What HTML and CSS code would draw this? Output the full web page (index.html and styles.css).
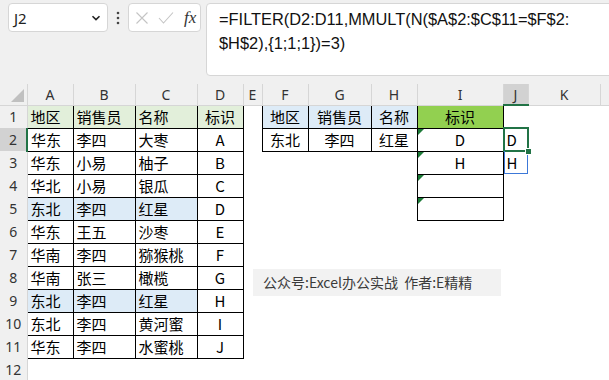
FILE: index.html
```html
<!DOCTYPE html>
<html lang="zh-CN">
<head>
<meta charset="UTF-8">
<title>FILTER MMULT</title>
<link rel="stylesheet" href="styles.css">
</head>
<body>
<div class="toolbar">
  <div class="namebox">
    <span>J2</span>
    <svg width="10" height="6" viewBox="0 0 10 6"><path d="M1.5 1.2 L5 4.6 L8.5 1.2" fill="none" stroke="#222" stroke-width="1.6"/></svg>
  </div>
  <svg class="dots" width="4" height="14" viewBox="0 0 4 14"><circle cx="2" cy="2" r="1.3" fill="#444"/><circle cx="2" cy="7" r="1.3" fill="#444"/><circle cx="2" cy="12" r="1.3" fill="#444"/></svg>
  <div class="fxbox">
    <svg width="14" height="14" viewBox="0 0 14 14"><path d="M1.5 1.5 L12.5 12.5 M12.5 1.5 L1.5 12.5" stroke="#c4c4c4" stroke-width="1.1"/></svg>
    <svg width="16" height="14" viewBox="0 0 16 14"><path d="M1 7 L5.5 12 L15 1.5" fill="none" stroke="#c4c4c4" stroke-width="1.1"/></svg>
    <span class="fx">fx</span>
  </div>
  <div class="formula">=FILTER(D2:D11,MMULT(N($A$2:$C$11=$F$2:<br>$H$2),{1;1;1})=3)</div>
</div>

<div class="sheet">
  <table class="grid">
    <colgroup>
      <col class="w-rh"><col class="w-46"><col class="w-62"><col class="w-62"><col class="w-46">
      <col class="w-19"><col class="w-46"><col class="w-63"><col class="w-46"><col class="w-86">
      <col class="w-25"><col class="w-72"><col class="w-20">
    </colgroup>
    <tr class="colhead">
      <th class="corner"><span class="corner-tri"></span></th>
      <th>A</th><th>B</th><th>C</th><th>D</th><th>E</th><th>F</th><th>G</th><th>H</th><th>I</th><th class="cur">J</th><th>K</th><th></th>
    </tr>
    <tr>
      <td class="rh">1</td>
      <td class="b l green">地区</td><td class="b l green">销售员</td><td class="b l green">名称</td><td class="b c green">标识</td>
      <td></td>
      <td class="b c blue">地区</td><td class="b c blue">销售员</td><td class="b c blue">名称</td><td class="b c lime">标识</td>
      <td></td><td></td><td></td>
    </tr>
    <tr>
      <td class="rh cur">2</td>
      <td class="b l">华东</td><td class="b l">李四</td><td class="b l">大枣</td><td class="b c">A</td>
      <td></td>
      <td class="b c">东北</td><td class="b c">李四</td><td class="b c">红星</td><td class="b c tri">D</td>
      <td class="l sel">D<span class="handle"></span></td><td></td><td></td>
    </tr>
    <tr>
      <td class="rh">3</td>
      <td class="b l">华东</td><td class="b l">小易</td><td class="b l">柚子</td><td class="b c">B</td>
      <td></td><td></td><td></td><td></td><td class="b c tri">H</td>
      <td class="l spill">H</td><td></td><td></td>
    </tr>
    <tr>
      <td class="rh">4</td>
      <td class="b l">华北</td><td class="b l">小易</td><td class="b l">银瓜</td><td class="b c">C</td>
      <td></td><td></td><td></td><td></td><td class="b c tri"></td>
      <td></td><td></td><td></td>
    </tr>
    <tr>
      <td class="rh">5</td>
      <td class="b l blue">东北</td><td class="b l blue">李四</td><td class="b l blue">红星</td><td class="b c">D</td>
      <td></td><td></td><td></td><td></td><td class="b c tri"></td>
      <td></td><td></td><td></td>
    </tr>
    <tr>
      <td class="rh">6</td>
      <td class="b l">华东</td><td class="b l">王五</td><td class="b l">沙枣</td><td class="b c">E</td>
      <td></td><td></td><td></td><td></td><td></td><td></td><td></td><td></td>
    </tr>
    <tr>
      <td class="rh">7</td>
      <td class="b l">华南</td><td class="b l">李四</td><td class="b l">猕猴桃</td><td class="b c">F</td>
      <td></td><td></td><td></td><td></td><td></td><td></td><td></td><td></td>
    </tr>
    <tr>
      <td class="rh">8</td>
      <td class="b l">华南</td><td class="b l">张三</td><td class="b l">橄榄</td><td class="b c">G</td>
      <td></td><td></td><td></td><td></td><td></td><td></td><td></td><td></td>
    </tr>
    <tr>
      <td class="rh">9</td>
      <td class="b l blue">东北</td><td class="b l blue">李四</td><td class="b l blue">红星</td><td class="b c">H</td>
      <td></td><td></td><td></td><td></td><td></td><td></td><td></td><td></td>
    </tr>
    <tr>
      <td class="rh">10</td>
      <td class="b l">东北</td><td class="b l">李四</td><td class="b l">黄河蜜</td><td class="b c">I</td>
      <td></td><td></td><td></td><td></td><td></td><td></td><td></td><td></td>
    </tr>
    <tr>
      <td class="rh">11</td>
      <td class="b l">华东</td><td class="b l">李四</td><td class="b l">水蜜桃</td><td class="b c">J</td>
      <td></td><td></td><td></td><td></td><td></td><td></td><td></td><td></td>
    </tr>
    <tr>
      <td class="rh">12</td>
      <td></td><td></td><td></td><td></td><td></td><td></td><td></td><td></td><td></td><td></td><td></td><td></td>
    </tr>
  </table>

  <div class="note">公众号:Excel办公实战&nbsp; 作者:E精精</div>
</div>
</body>
</html>
```

FILE: styles.css
```css
body {
  margin: 0;
  width: 609px;
  height: 380px;
  overflow: hidden;
  background: #fff;
  font-family: "Noto Sans CJK SC", "Noto Sans", sans-serif;
}

/* top bar with name box and formula */
.toolbar {
  display: flex;
  align-items: flex-start;
  height: 84px;
  padding: 3px 0 0 8px;
  box-sizing: border-box;
  background: #f0f0f0;
  overflow: hidden;
}
.toolbar > * {
  flex: none;
}
.namebox {
  display: flex;
  align-items: center;
  justify-content: space-between;
  width: 100px;
  height: 29px;
  padding: 0 6px 0 5px;
  box-sizing: border-box;
  background: #fff;
  border: 1px solid #d6d6d6;
  border-radius: 4px;
  font-family: "Noto Sans", sans-serif;
  font-size: 15px;
  color: #222;
}
.dots {
  margin: 8px 8px 0 8px;
}
.fxbox {
  display: flex;
  align-items: center;
  gap: 9px;
  width: 73px;
  height: 29px;
  padding-left: 6px;
  box-sizing: border-box;
  background: #fff;
  border: 1px solid #d6d6d6;
  border-radius: 4px;
}
.fx {
  font-family: "Liberation Serif", serif;
  font-style: italic;
  font-size: 17px;
  color: #333;
  margin-left: 1px;
}
.formula {
  width: 440px;
  height: 73px;
  margin-left: 5px;
  padding: 3px 0 0 12px;
  box-sizing: border-box;
  background: #fff;
  border: 1px solid #d6d6d6;
  border-radius: 4px;
  font-family: "Liberation Sans", sans-serif;
  font-size: 16.4px;
  line-height: 24px;
  color: #111;
  white-space: nowrap;
}

/* worksheet */
.sheet {
  position: relative;
}
.grid {
  border-collapse: collapse;
  table-layout: fixed;
  width: 620px;
}
.w-rh { width: 27px; }
.w-19 { width: 19px; }
.w-20 { width: 20px; }
.w-25 { width: 25px; }
.w-46 { width: 46px; }
.w-62 { width: 62px; }
.w-63 { width: 63px; }
.w-72 { width: 72px; }
.w-86 { width: 86px; }

.grid tr {
  height: 23px;
}
.grid td {
  padding: 0;
  font-size: 15px;
  line-height: 20px;
  color: #000;
  white-space: nowrap;
  overflow: hidden;
}
.colhead {
  height: 21px !important;
}
.colhead th {
  padding: 0;
  background: #f0f0f0;
  border-right: 1px solid #d6d6d6;
  border-bottom: 1px solid #d6d6d6;
  font-family: "Noto Sans", sans-serif;
  font-weight: normal;
  font-size: 14px;
  color: #333;
  text-align: center;
}
.colhead th.cur {
  background: #d2d2d2;
  border-bottom: 2px solid #217346;
}
.corner {
  position: relative;
}
.corner-tri {
  position: absolute;
  right: 3px;
  bottom: 3px;
  border-left: 13px solid transparent;
  border-bottom: 13px solid #c0c0c0;
}
.rh {
  background: #f0f0f0;
  text-align: center;
  font-family: "Noto Sans", sans-serif;
  font-size: 14px !important;
  color: #333 !important;
  border-right: 1px solid #d6d6d6;
}
.rh.cur {
  background: #d2d2d2;
  border-right: 2px solid #217346;
}

.b { border: 1px solid #000; }
.l { text-align: left; padding-left: 3px !important; }
.c { text-align: center; }
.green { background: #e2efda; }
.blue { background: #ddebf7; }
.lime { background: #92d050; }

/* green error markers in I2:I5 */
.tri {
  position: relative;
}
.tri::before {
  content: "";
  position: absolute;
  left: 0;
  top: 0;
  border-top: 6px solid #1d7b38;
  border-right: 6px solid transparent;
}

/* active cell J2 and spill J3 */
.sel,
.spill {
  position: relative;
  overflow: visible !important;
}
.sel::after {
  content: "";
  position: absolute;
  left: -1px;
  top: -1px;
  right: -1px;
  bottom: -1px;
  border: 2px solid #217346;
}
.handle {
  position: absolute;
  right: -4px;
  bottom: -4px;
  width: 5px;
  height: 5px;
  background: #217346;
  border: 1px solid #fff;
  z-index: 2;
}
.spill::after {
  content: "";
  position: absolute;
  left: 0;
  top: 0;
  right: 0;
  bottom: 0;
  border: 1px solid #3c78d8;
  border-top: none;
}

/* floating text box */
.note {
  position: absolute;
  left: 253px;
  top: 185px;
  width: 248px;
  height: 27px;
  padding-left: 10px;
  box-sizing: border-box;
  background: #f2f2f2;
  font-size: 14px;
  line-height: 27px;
  color: #3a3a3a;
}
```
